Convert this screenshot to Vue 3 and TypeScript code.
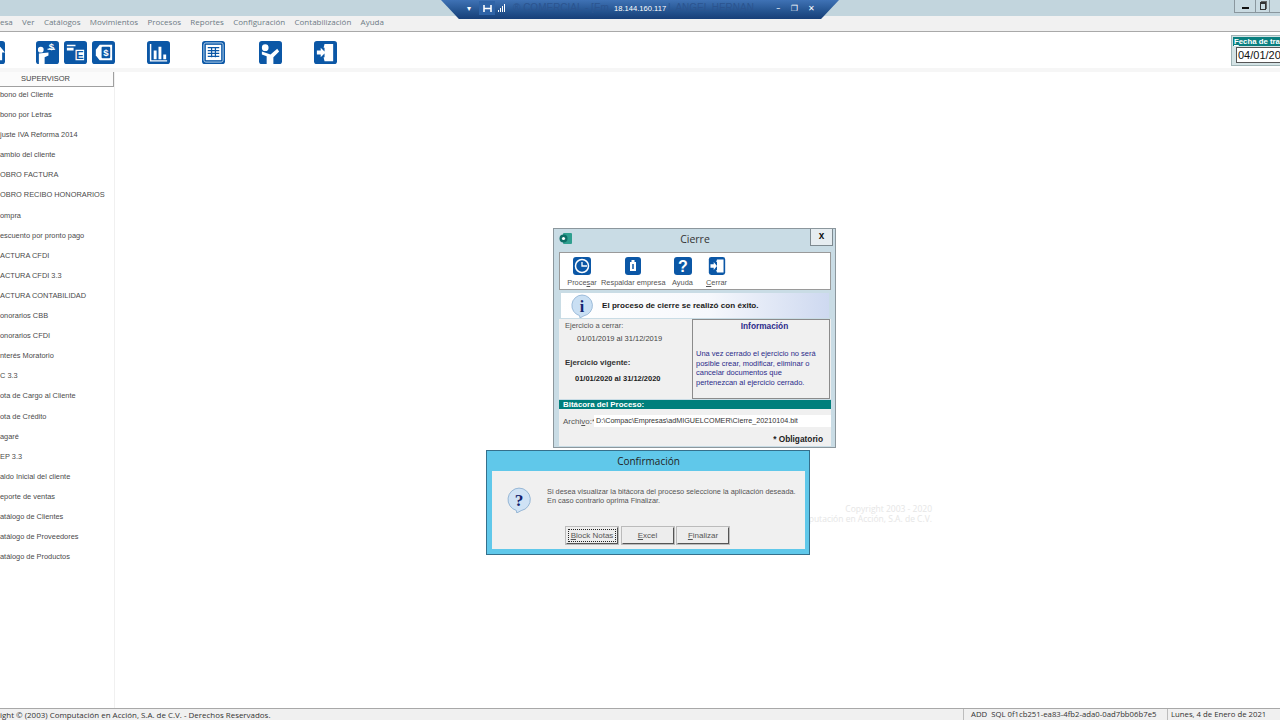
<script setup lang="ts">
const menus = ['esa', 'Ver', 'Catálogos', 'Movimientos', 'Procesos', 'Reportes', 'Configuración', 'Contabilización', 'Ayuda']

const tools = [
  { id: 'cliente', paths: ['M2 9a3 3 0 1 1 6 0a3 3 0 1 1-6 0zM3 13l10-1v3l-4 2v7H3z', 'M12 8h8v1.200h-8z'], gap: 0 },
  { id: 'factura', paths: ['M3 4h9v1.500H3zM3 7h7v3H3zM12 9h9v11h-9z'], gap: 5 },
  { id: 'pago', paths: ['M8 4h13v16H8l-4-5V9z'], gap: 5 },
  { id: 'reporte', paths: ['M3 3h1.500v17H21v1.500H3zM7 10h3v9H7zM12 6h3v13h-3zM17 14h3v5h-3z'], gap: 32 },
  { id: 'tabla', paths: ['M4 4h16v16H4z'], gap: 32 },
  { id: 'usuario', paths: ['M3 7a3.500 3.500 0 1 1 7 0a3.500 3.500 0 1 1-7 0zM3 11l9 3 7-6 2 3-6 6v7H8v-8L3 14z'], gap: 34 },
  { id: 'salir', paths: ['M11 3h9v18h-9l-1-4h1V7h-1zM3 10h4V7l5 5-5 5v-3H3z'], gap: 32 },
]

const accesos = [
  'bono del Cliente', 'bono por Letras', 'juste IVA Reforma 2014', 'ambio del cliente', 'OBRO FACTURA',
  'OBRO RECIBO HONORARIOS', 'ompra', 'escuento por pronto pago', 'ACTURA CFDI', 'ACTURA CFDI 3.3',
  'ACTURA CONTABILIDAD', 'onorarios CBB', 'onorarios CFDI', 'nterés Moratorio', 'C 3.3',
  'ota de Cargo al Cliente', 'ota de Crédito', 'agaré', 'EP 3.3', 'aldo Inicial del cliente',
  'eporte de ventas', 'atálogo de Clientes', 'atálogo de Proveedores', 'atálogo de Productos',
]
</script>

<template>
  <div class="app">
    <header class="titlebar">
      <div class="win-btn first">
        <span class="min-mark"></span>
      </div>
      <div class="win-btn second">
        <span class="max-mark"></span>
      </div>
      <div class="win-btn third"></div>
    </header>

    <nav class="menubar">
      <span v-for="m in menus" :key="m">{{ m }}</span>
    </nav>

    <div class="toolbar">
      <div class="tool cut">
        <svg width="23" height="23" viewBox="0 0 24 24"><rect width="24" height="24" rx="3" fill="#0b57a6" /><path d="M19 6l-5 6h3v8h4v-8h3z" fill="#fff" /></svg>
      </div>
      <svg
        v-for="t in tools"
        :key="t.id"
        class="tool"
        :style="{ marginLeft: t.gap + 'px' }"
        width="23"
        height="23"
        viewBox="0 0 24 24"
      >
        <rect width="24" height="24" rx="3" fill="#0b57a6" />
        <path v-for="p in t.paths" :key="p" :d="p" fill="#fff" />
        <template v-if="t.id === 'tabla'">
          <rect x="2" y="2" width="20" height="20" rx="2" fill="none" stroke="#bcd6ee" stroke-width="1" />
          <path d="M6 7h12M6 10h12M6 13h12M6 16h12M10 7v10M14 7v10" stroke="#0b57a6" stroke-width="1.300" fill="none" />
        </template>
        <template v-if="t.id === 'pago'">
          <rect x="10" y="6" width="9" height="12" rx="1" fill="#0b57a6" />
          <text x="14.500" y="15.500" class="glyph light">$</text>
        </template>
        <template v-if="t.id === 'cliente'">
          <text x="16" y="9" class="glyph light">$</text>
        </template>
        <template v-if="t.id === 'factura'">
          <text x="16.500" y="18.500" class="glyph">E</text>
        </template>
      </svg>
      <div class="fecha">
        <div class="fecha-head"><u>F</u>echa de tra</div>
        <div class="fecha-input">04/01/20</div>
      </div>
    </div>

    <div class="toolbar-foot"></div>

    <main class="workspace">
      <aside class="sidebar">
        <div class="side-head">SUPERVISOR</div>
        <ul class="side-list">
          <li v-for="a in accesos" :key="a">{{ a }}</li>
        </ul>
      </aside>
      <div class="desktop">
        <div class="watermark">
          <div>Copyright 2003 - 2020</div>
          <div>Computación en Acción, S.A. de C.V.</div>
        </div>

        <section class="cierre">
          <div class="cierre-title">
            <svg class="app-icon" width="13" height="13" viewBox="0 0 13 13">
              <rect x="4" y="1" width="9" height="11" rx="1" fill="#2f9f8f" />
              <circle cx="4.500" cy="6.500" r="4" fill="#0f6e66" />
              <circle cx="4.500" cy="6.500" r="1.600" fill="#fff" />
            </svg>
            <span>Cierre</span>
            <button class="close-btn">x</button>
          </div>
          <div class="cierre-tools">
            <div class="ctool">
              <svg width="20" height="18" viewBox="0 0 20 18">
                <rect x="1" width="18" height="18" rx="3" fill="#0b57a6" />
                <circle cx="10" cy="9" r="6.500" fill="none" stroke="#fff" stroke-width="1.500" />
                <path d="M10 5v4h5" fill="none" stroke="#fff" stroke-width="1.300" />
              </svg>
              <span>Proce<u>s</u>ar</span>
            </div>
            <div class="ctool">
              <svg width="20" height="18" viewBox="0 0 20 18">
                <rect x="2" width="16" height="18" rx="3" fill="#0b57a6" />
                <path d="M7 5h6v9H7zM8.500 3h3v2h-3z" fill="#fff" />
                <path d="M10 7v5" stroke="#0b57a6" stroke-width="1.500" />
              </svg>
              <span>Respaldar empresa</span>
            </div>
            <div class="ctool ayuda">
              <svg width="20" height="18" viewBox="0 0 20 18">
                <rect x="1" width="18" height="18" rx="3" fill="#0b57a6" />
                <text x="10" y="15" class="help-mark">?</text>
              </svg>
              <span>Ayuda</span>
            </div>
            <div class="ctool">
              <svg width="20" height="18" viewBox="0 0 24 22">
                <rect x="2" width="20" height="22" rx="3" fill="#0b57a6" />
                <path d="M12 3h8v16h-8l-1-3h1V6h-1zM4 9h4V6l4 5-4 5v-3H4z" fill="#fff" />
              </svg>
              <span><u>C</u>errar</span>
            </div>
          </div>
          <div class="cierre-ok">
            <svg class="bubble" width="24" height="24" viewBox="0 0 24 24">
              <path d="M12 1a10.500 10.500 0 0 1 2 20.800L10 24l-.5-2.400A10.500 10.500 0 0 1 12 1z" fill="#c9dff3" stroke="#7fa6cc" stroke-width=".7" />
              <text x="12" y="18" class="info-mark">i</text>
            </svg>
            <strong>El proceso de cierre se realizó con éxito.</strong>
          </div>
          <div class="cierre-body">
            <div class="ejercicios">
              <div>Ejercicio a cerrar:</div>
              <div class="rango">01/01/2019 al 31/12/2019</div>
              <div class="vigente">Ejercicio vigente:</div>
              <div class="rango actual">01/01/2020 al 31/12/2020</div>
            </div>
            <div class="info-box">
              <h4>Información</h4>
              <p>Una vez cerrado el ejercicio no será posible crear, modificar, eliminar o cancelar documentos que pertenezcan al ejercicio cerrado.</p>
            </div>
          </div>
          <div class="bitacora">Bitácora del Proceso:</div>
          <div class="archivo">
            <span>Archi<u>v</u>o:*</span>
            <div class="archivo-input">D:\Compac\Empresas\adMIGUELCOMER\Cierre_20210104.bit</div>
          </div>
          <div class="obligatorio">* Obligatorio</div>
        </section>

        <section class="confirma">
          <div class="confirma-title">Confirmación</div>
          <div class="confirma-body">
            <div class="confirma-msg">
              <svg class="bubble" width="26" height="26" viewBox="0 0 24 24">
                <path d="M12 1a10.500 10.500 0 0 1 2 20.800L10 24l-.5-2.400A10.500 10.500 0 0 1 12 1z" fill="#cfe2f5" stroke="#7fa6cc" stroke-width=".7" />
                <text x="12" y="17.500" class="ask-mark">?</text>
              </svg>
              <p>Si desea visualizar la bitácora del proceso seleccione la aplicación deseada.<br />En caso contrario oprima Finalizar.</p>
            </div>
            <div class="confirma-btns">
              <button class="focused"><u>B</u>lock Notas</button>
              <button><u>E</u>xcel</button>
              <button><u>F</u>inalizar</button>
            </div>
          </div>
        </section>
      </div>
    </main>

    <footer class="statusbar">
      <span class="legal">ight © (2003) Computación en Acción, S.A. de C.V. - Derechos Reservados.</span>
      <span class="panel sql">ADD&nbsp; SQL 0f1cb251-ea83-4fb2-ada0-0ad7bb06b7e5</span>
      <span class="panel date">Lunes, 4 de Enero de 2021</span>
    </footer>

    <div class="rdp">
      <div class="rdp-shape">
        <span class="rdp-ghost one">® COMERCIAL - [Em</span>
        <span class="rdp-ghost two">L ANGEL HERNAN</span>
      </div>
      <div class="rdp-content">
        <span class="rdp-ic">▾</span>
        <span class="rdp-pin">
          <svg width="9" height="7" viewBox="0 0 10 8"><path d="M1 0v8M9 0v8M1 4h8" stroke="#fff" stroke-width="1.800" fill="none" /></svg>
        </span>
        <span class="rdp-bars"><i></i><i></i><i></i><i></i></span>
        <span class="rdp-ip">18.144.160.117</span>
        <span class="rdp-ic end">–</span>
        <span class="rdp-ic wide">❐</span>
        <span class="rdp-ic wide">✕</span>
      </div>
    </div>
  </div>
</template>

<style scoped>
.app {
  position: relative;
  width: 1280px;
  height: 720px;
  display: flex;
  flex-direction: column;
  overflow: hidden;
  background: #fff;
  font-family: "Liberation Sans", Arial, sans-serif;
  color: #333;
}
.titlebar {
  height: 16px;
  background: #c2d5dd;
  display: flex;
  justify-content: flex-end;
  flex-shrink: 0;
}
.win-btn {
  height: 13px;
  box-sizing: border-box;
  border-left: 1px solid #8a979e;
  border-bottom: 1px solid #8a979e;
  background: #c9dae1;
  display: flex;
  align-items: center;
  justify-content: center;
}
.win-btn.first { width: 21px; }
.win-btn.second { width: 14px; }
.win-btn.third { width: 11px; }
.min-mark {
  width: 7px;
  height: 2px;
  margin-top: 3px;
  background: #111;
}
.max-mark {
  width: 4px;
  height: 5px;
  border: 1px solid #333;
  border-top-width: 2px;
  box-shadow: 1px -1px 0 #666;
}
.menubar {
  height: 10px;
  background: #f1f1f1;
  border-bottom: 1px solid #a9a9a9;
  display: flex;
  align-items: center;
  gap: 9.300px;
  font-family: "Open Sans", sans-serif;
  font-size: 8px;
  color: #6d7b85;
  flex-shrink: 0;
  padding-bottom: 5px;
}
.toolbar {
  height: 36px;
  display: flex;
  align-items: center;
  flex-shrink: 0;
  padding-top: 5px;
  box-sizing: border-box;
  position: relative;
}
.tool {
  flex-shrink: 0;
  display: block;
}
.tool.cut {
  width: 5px;
  height: 23px;
  margin-right: 31px;
  overflow: hidden;
  position: relative;
}
.tool.cut svg {
  position: absolute;
  right: 0;
  top: 0;
}
.glyph {
  fill: #0b57a6;
  font-size: 12px;
  font-weight: 700;
  text-anchor: middle;
  font-family: "Liberation Sans", sans-serif;
}
.glyph.light {
  font-size: 10px;
  fill: #fff;
}
.fecha {
  position: absolute;
  left: 1231px;
  top: 3px;
  width: 60px;
  height: 31px;
  box-sizing: border-box;
  background: #d4e3e5;
  border: 1px solid #9fb4b6;
  padding: 1px;
}
.fecha-head {
  height: 9px;
  background: #0a7f7f;
  color: #fff;
  font-size: 7.800px;
  font-weight: 700;
  line-height: 9px;
  white-space: nowrap;
  padding-left: 1px;
}
.fecha-input {
  height: 14px;
  margin: 1px 0 0 3px;
  background: #fff;
  border: 1px solid #555;
  color: #111;
  font-size: 11px;
  line-height: 14px;
  padding-left: 1px;
  white-space: nowrap;
}
.toolbar-foot {
  height: 4px;
  background: #f6f6f6;
  flex-shrink: 0;
}
.workspace {
  flex: 1;
  display: flex;
  min-height: 0;
}
.sidebar {
  width: 115px;
  flex-shrink: 0;
  border-right: 1px solid #f0f0f0;
  box-sizing: border-box;
}
.side-head {
  height: 15px;
  border-right: 1px solid #a0a0a0;
  border-bottom: 1px solid #a0a0a0;
  background: #fbfbfb;
  font-size: 7.500px;
  line-height: 14px;
  text-align: center;
  color: #444;
  box-sizing: border-box;
  padding-right: 22px;
}
.side-list {
  list-style: none;
  margin: 0;
  padding: 0;
}
.side-list li {
  height: 20.100px;
  line-height: 16px;
  font-size: 7.400px;
  color: #4a4a4a;
  white-space: nowrap;
}
.desktop {
  flex: 1;
  position: relative;
}
.watermark {
  position: absolute;
  right: 348px;
  top: 432px;
  text-align: right;
  color: #e6e6e6;
  font-family: "Open Sans", sans-serif;
  font-size: 8.500px;
  line-height: 10px;
  white-space: nowrap;
}
/* ventanas flotantes sobre el escritorio */
.cierre {
  position: absolute;
  left: 438px;
  top: 156px;
  width: 283px;
  height: 220px;
  box-sizing: border-box;
  background: #c9dce5;
  border: 1px solid #8c979d;
  padding: 0 4px 0 5px;
  display: flex;
  flex-direction: column;
}
.cierre-title {
  height: 20px;
  margin-bottom: 2px;
  display: flex;
  align-items: center;
  justify-content: center;
  position: relative;
  font-family: "Open Sans", sans-serif;
  font-size: 10.500px;
  color: #333;
  flex-shrink: 0;
}
.app-icon {
  position: absolute;
  left: 0;
  top: 3px;
}
.close-btn {
  position: absolute;
  right: -2px;
  top: 0;
  width: 23px;
  height: 17px;
  padding: 0 0 3px;
  background: #e6edf1;
  border: 1px solid #7e8a90;
  border-top: 0;
  font-family: "Liberation Sans", sans-serif;
  font-weight: 700;
  font-size: 10px;
  color: #111;
}
.cierre-tools {
  height: 38px;
  flex-shrink: 0;
  background: #fff;
  border: 1px solid #9a9a9a;
  box-sizing: border-box;
  display: flex;
  gap: 4px;
  padding: 4px 0 0 7px;
  margin-top: 1px;
}
.ctool {
  display: flex;
  flex-direction: column;
  align-items: center;
  font-size: 7.400px;
  color: #555;
  white-space: nowrap;
  line-height: 10px;
  gap: 3px;
  min-width: 30px;
}
.ctool.ayuda {
  margin-left: -2px;
}
.help-mark {
  fill: #fff;
  font-family: "Liberation Sans", sans-serif;
  font-weight: 700;
  font-size: 16px;
  text-anchor: middle;
}
.bubble {
  flex-shrink: 0;
}
.cierre-ok {
  height: 25px;
  flex-shrink: 0;
  margin: 3px 2px 0;
  background: linear-gradient(90deg, #fff 0%, #f6f8fc 55%, #ced9f0 100%);
  display: flex;
  align-items: center;
  gap: 8px;
  padding-left: 9px;
  font-size: 8.100px;
  color: #1a1a1a;
}
.info-mark,
.ask-mark {
  fill: #14246e;
  font-family: "Liberation Serif", serif;
  font-weight: 700;
  font-size: 16px;
  text-anchor: middle;
}
.cierre-body {
  background: #f0f0f0;
  display: flex;
  justify-content: space-between;
  height: 80px;
  flex-shrink: 0;
  margin: 1px 0 0;
}
.ejercicios {
  font-size: 7.500px;
  color: #555;
  padding: 2px 0 0 6px;
  line-height: 10px;
}
.rango {
  margin: 3px 0 0 12px;
  color: #444;
}
.vigente {
  margin-top: 14px;
  font-size: 7.900px;
  font-weight: 700;
  color: #333;
}
.rango.actual {
  margin: 6px 0 0 10px;
  font-weight: 700;
  color: #222;
}
.info-box {
  width: 138px;
  margin-right: 1px;
  box-sizing: border-box;
  border: 1px solid #8b8b8b;
  padding: 1px 3px 0 3px;
  color: #2b2b8a;
  font-size: 7.500px;
}
.info-box h4 {
  margin: 0;
  padding-left: 7px;
  text-align: center;
  font-size: 8.300px;
  line-height: 11px;
}
.info-box p {
  margin: 17px 0 0;
  padding-right: 8px;
  line-height: 9.700px;
}
.bitacora {
  height: 9px;
  line-height: 9px;
  flex-shrink: 0;
  margin-top: 1px;
  background: #007f7c;
  color: #fff;
  font-size: 7.900px;
  font-weight: 700;
  padding-left: 4px;
}
.archivo {
  height: 28px;
  flex-shrink: 0;
  background: #f0f0f0;
  display: flex;
  align-items: flex-start;
  padding: 6px 0 0 4px;
  box-sizing: border-box;
  font-size: 8px;
  color: #555;
}
.archivo span {
  width: 31px;
  line-height: 13px;
  flex-shrink: 0;
}
.archivo-input {
  flex: 1;
  height: 12px;
  line-height: 12px;
  background: #fff;
  color: #333;
  font-size: 7.200px;
  white-space: nowrap;
  padding-left: 2px;
}
.obligatorio {
  margin-top: -5px;
  height: 14px;
  background: #f0f0f0;
  flex-shrink: 0;
  text-align: right;
  padding-right: 8px;
  font-size: 8.300px;
  font-weight: 700;
  line-height: 14px;
  color: #222;
}
.confirma {
  position: absolute;
  left: 371px;
  top: 378px;
  width: 324px;
  height: 105px;
  box-sizing: border-box;
  background: #60c8ea;
  border: 1px solid #35708c;
  padding: 0 4px 5px 5px;
  display: flex;
  flex-direction: column;
}
.confirma-title {
  height: 20px;
  line-height: 20px;
  flex-shrink: 0;
  text-align: center;
  font-family: "Open Sans", sans-serif;
  font-size: 10px;
  color: #222;
}
.confirma-body {
  flex: 1;
  background: #f0f0f0;
  padding: 16px 0 0 14px;
  display: flex;
  flex-direction: column;
}
.confirma-msg {
  display: flex;
  gap: 15px;
  color: #555;
  font-size: 7.350px;
}
.confirma-msg p {
  margin: 0;
  line-height: 9px;
  white-space: nowrap;
}
.confirma-btns {
  margin-top: 14px;
  margin-left: 60px;
  display: flex;
  gap: 3.500px;
}
.confirma-btns button {
  width: 52px;
  height: 17px;
  padding: 0;
  background: #ededed;
  border: 1px solid #666;
  border-color: #eee #555 #555 #eee;
  box-shadow: 0 0 0 1px #bbb;
  font-family: "Liberation Sans", sans-serif;
  font-size: 8px;
  color: #555;
}
.confirma-btns .focused {
  outline: 1px dotted #222;
  outline-offset: -3px;
}
.statusbar {
  height: 12px;
  flex-shrink: 0;
  background: #f0f0f0;
  border-top: 1px solid #a8a8a8;
  box-sizing: border-box;
  display: flex;
  align-items: center;
  font-family: "Open Sans", sans-serif;
  font-size: 7.950px;
  color: #333;
  white-space: nowrap;
}
.legal {
  flex: 1;
}
.panel {
  height: 11px;
  line-height: 11px;
  border-left: 1px solid #bdbdbd;
  font-size: 7.750px;
  box-sizing: border-box;
}
.sql {
  width: 204px;
  padding-left: 7px;
}
.date {
  width: 113px;
  padding-left: 3px;
}
.rdp {
  position: absolute;
  left: 441px;
  top: 0;
  width: 398px;
  height: 19px;
}
.rdp-shape {
  position: absolute;
  inset: 0;
  clip-path: polygon(0 0, 100% 0, 95.500% 100%, 4.500% 100%);
  background: linear-gradient(180deg, #3f72b5 0%, #24538f 60%, #173f78 100%);
  overflow: hidden;
}
.rdp-ghost {
  position: absolute;
  top: 2px;
  font-size: 10px;
  line-height: 12px;
  white-space: nowrap;
  color: #2b548f;
}
.rdp-ghost.one {
  left: 72px;
}
.rdp-ghost.two {
  left: 227px;
}
.rdp-content {
  position: absolute;
  inset: 0;
  display: flex;
  align-items: center;
  color: #fff;
  font-size: 9px;
  padding-left: 21px;
  padding-bottom: 3px;
  box-sizing: border-box;
}
.rdp-ic {
  width: 14px;
  text-align: center;
  font-family: "DejaVu Sans", sans-serif;
  font-size: 8px;
}
.rdp-ic.wide {
  width: 16px;
  margin-left: 1px;
}
.rdp-ic.end {
  margin-left: 105px;
}
.rdp-pin {
  width: 16px;
  height: 14px;
  margin-left: 3px;
  display: flex;
  align-items: center;
  justify-content: center;
  background: #2f63a6;
}
.rdp-bars {
  display: flex;
  align-items: flex-end;
  gap: 1px;
  height: 8px;
  margin-left: 3px;
}
.rdp-bars i {
  width: 1px;
  background: #fff;
}
.rdp-bars i:nth-child(1) { height: 2px; }
.rdp-bars i:nth-child(2) { height: 4px; }
.rdp-bars i:nth-child(3) { height: 6px; }
.rdp-bars i:nth-child(4) { height: 8px; }
.rdp-ip {
  margin-left: 109px;
  font-family: "Liberation Sans", sans-serif;
  font-size: 7.600px;
}
</style>

<style>
html,
body {
  margin: 0;
  background: #fff;
}
</style>
